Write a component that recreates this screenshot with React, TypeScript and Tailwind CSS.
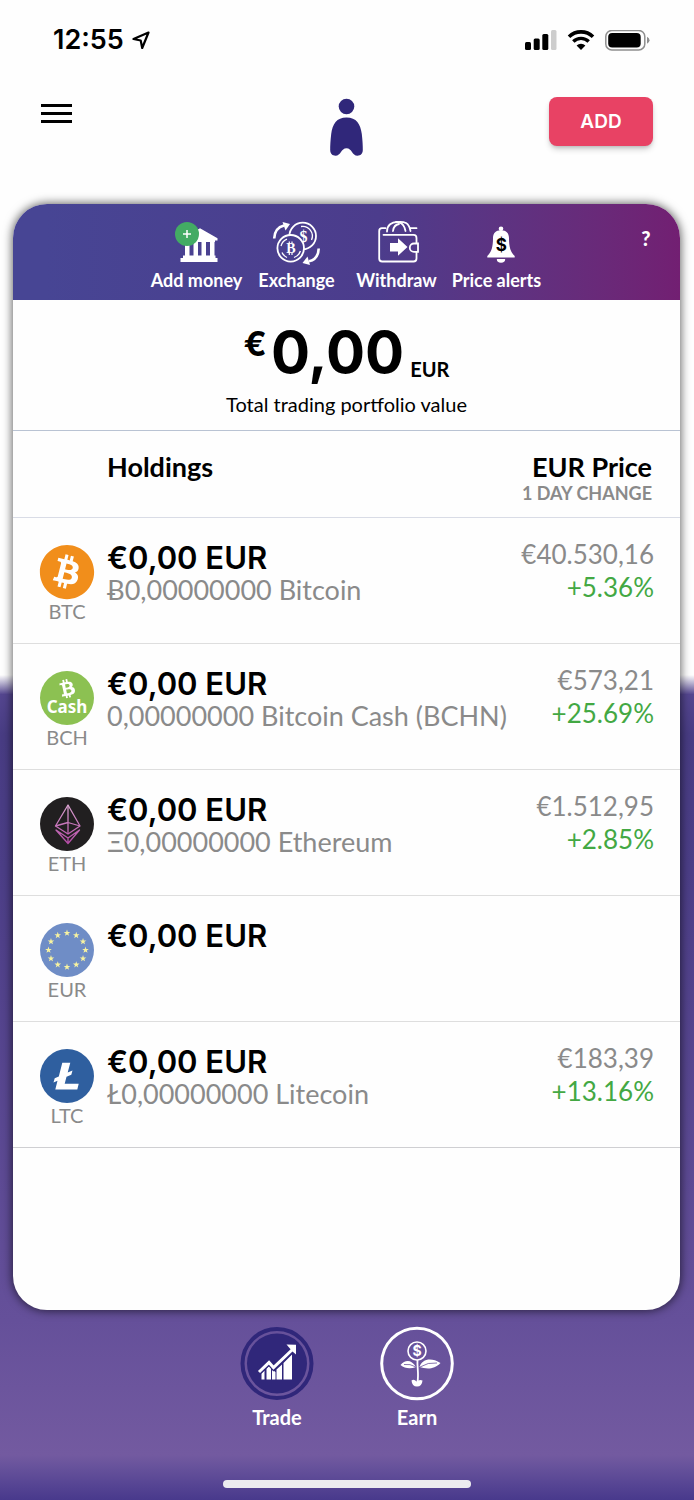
import type { ReactNode } from "react";
import { FaBitcoin, FaBtc } from "react-icons/fa";

type Holding = {
  code: string;
  icon: ReactNode;
  value: string;
  amount?: string;
  price?: string;
  change?: string;
};

/* ---------- Status bar ---------- */

function StatusBar() {
  return (
    <div className="flex h-20 items-center justify-between pr-11 pl-[53px] text-black">
      <div className="flex items-center gap-2">
        <span className="font-[Inter,sans-serif] text-[27px] leading-8 font-semibold">12:55</span>
        <svg width="18" height="19" viewBox="0 0 18 19" fill="none" aria-hidden>
          <path d="M16.5 1.500 L1.500 8 L8.700 9.500 L10.200 17 Z" stroke="currentColor" strokeWidth="2.200" strokeLinejoin="round" />
        </svg>
      </div>
      <div className="flex items-center gap-[10px]">
        <svg width="32" height="21" viewBox="0 0 32 21" fill="currentColor" aria-hidden>
          <rect x="0" y="12" width="6" height="8" rx="1.500" />
          <rect x="8.700" y="8.500" width="6" height="11.500" rx="1.500" />
          <rect x="17.300" y="4" width="6" height="16" rx="1.500" />
          <rect x="26" y="0" width="5.500" height="20" rx="1.500" fill="#cdcdcd" />
        </svg>
        <svg width="28" height="21" viewBox="0 0 28 21" fill="none" stroke="currentColor" aria-hidden>
          <path d="M2 6.800 A17.200 17.200 0 0 1 26 6.800" strokeWidth="3.600" />
          <path d="M6.300 11.500 A11 11 0 0 1 21.700 11.500" strokeWidth="3.400" />
          <path d="M14 20 L9.600 15.500 A6.300 6.300 0 0 1 18.400 15.500 Z" fill="currentColor" stroke="none" />
        </svg>
        <svg width="45" height="21" viewBox="0 0 45 21" aria-hidden>
          <rect x="0.800" y="0.500" width="39" height="19.400" rx="6" fill="none" stroke="#8f8f8f" strokeWidth="1.500" />
          <rect x="3.200" y="2.900" width="32.500" height="14.600" rx="4" fill="#000" />
          <path d="M42 6.700 Q44.500 7.700 44.500 10.200 Q44.500 12.700 42 13.700 Z" fill="#8f8f8f" />
        </svg>
      </div>
    </div>
  );
}

/* ---------- Top bar ---------- */

function TopBar() {
  return (
    <header className="grid h-[124px] grid-cols-3 items-start px-[41px] pt-[17px]">
      <button type="button" aria-label="Menu" className="mt-[7px] flex w-[31px] flex-col gap-[5px]">
        <span className="h-[3px] bg-black" />
        <span className="h-[3px] bg-black" />
        <span className="h-[3px] bg-black" />
      </button>
      <svg width="34" height="58" viewBox="0 0 34 58" fill="#30277a" className="mt-px justify-self-center" aria-hidden>
        <circle cx="16.500" cy="8.500" r="7.800" />
        <path d="M16.500 19.500 C26.500 19.500 30.500 26 31.800 36 C32.500 42 32.900 48 32.800 52 C32.700 56 30.500 57.700 27.500 57.700 C22 57.700 22 50.200 16.500 50.200 C11 50.200 11 57.700 5.500 57.700 C2.500 57.700 0.300 56 0.200 52 C0.100 48 0.500 42 1.200 36 C2.500 26 6.500 19.500 16.500 19.500 Z" />
      </svg>
      <button
        type="button"
        className="h-[49px] w-[104px] justify-self-end rounded-lg bg-[#e84264] pt-[2px] font-[Inter,sans-serif] text-[19px] font-semibold text-white shadow-md shadow-black/20"
      >
        ADD
      </button>
    </header>
  );
}

/* ---------- Quick actions ---------- */

function BankIcon() {
  return (
    <svg width="60" height="48" viewBox="0 0 60 48" fill="#fff" aria-hidden>
      <path d="M13.500 21.500 L33 10.300 L50.500 20.300 L50.500 22.500 L48 22.500 L48 24 L16 24 L16 22 Z" />
      <path d="M18 24 H22.500 V38 H18 Z M26.500 24 H31 V38 H26.500 Z M34.500 24 H39 V38 H34.500 Z M43 24 H47.500 V38 H43 Z" />
      <path d="M16 37.500 H48.500 V40 H50.500 V44 H13.500 V40 H16 Z" />
      <circle cx="20" cy="16" r="12" fill="#43ab64" />
      <path d="M20 12 V20 M16 16 H24" stroke="#fff" strokeWidth="1.500" />
    </svg>
  );
}

function ExchangeIcon() {
  return (
    <svg width="60" height="48" viewBox="0 0 60 48" fill="none" stroke="#fff" strokeWidth="1.800" aria-hidden>
      <circle cx="35.700" cy="18" r="13.300" />
      <path d="M34 8.500 A9.700 9.700 0 0 1 44.500 22" strokeWidth="1.300" />
      <text x="36.500" y="23.500" textAnchor="middle" fill="#fff" stroke="none" fontSize="16" fontWeight="700" fontFamily="Liberation Serif, serif">$</text>
      <circle cx="23.700" cy="30.300" r="13.300" fill="#4a408f" />
      <path d="M14 28 A10 10 0 0 1 20 21.200 M33.400 33 A10 10 0 0 1 27 39.500 M15 34.500 A10 10 0 0 0 20 39.500" strokeWidth="1.300" />
      <text x="23.800" y="35" textAnchor="middle" fill="#fff" stroke="none" fontSize="14" fontWeight="700" fontFamily="Liberation Serif, serif">B</text>
      <path d="M22.300 25 V23.500 M25 25 V23.500 M22.300 37 V35 M25 37 V35" strokeWidth="1.200" />
      <path d="M7.200 20.500 C7.500 13.500 11 9 17 7.500" strokeWidth="2.600" />
      <path d="M15.500 4 L23 6 L18.500 12.500 Z" fill="#fff" stroke="none" />
      <path d="M51.700 30.500 C51.400 37.500 48 42 42 43.300" strokeWidth="2.600" />
      <path d="M43 47 L35.500 45 L40.500 38.500 Z" fill="#fff" stroke="none" />
    </svg>
  );
}

function WalletIcon() {
  return (
    <svg width="60" height="48" viewBox="0 0 60 48" fill="none" stroke="#fff" strokeWidth="1.800" strokeLinecap="round" aria-hidden>
      <path d="M49.500 25 V20 Q49.500 16.800 46.500 16.800 H16.500" />
      <path d="M18.500 10.200 H15 Q12.200 10.200 12.200 13 V40.500 Q12.200 43.500 15.200 43.500 H46.500 Q49.500 43.500 49.500 40.500 V34" />
      <path d="M20 13.500 C20 7 25 4 30 4 C33 4 36 6 37.500 9.500 L38.500 13" />
      <path d="M26 13 C26.500 9 28.500 6.500 32 6 M29 4.200 C33 3.500 36 3.500 39 5 C42.500 7 43 10.200 43.500 13" />
      <path d="M43.500 10.200 H49.500" />
      <path d="M51 25.500 H47 A4.200 4.200 0 0 0 47 33.900 H51 Z" />
      <path d="M23 25 H31 V20.300 L40.500 29 L31 37.700 V33.500 H23 Z" fill="#fff" stroke="none" />
    </svg>
  );
}

function BellIcon() {
  return (
    <svg width="60" height="48" viewBox="0 0 60 48" fill="#fff" aria-hidden>
      <circle cx="34" cy="10.800" r="2.300" />
      <path d="M34 12.200 C39.500 12.200 42 15.500 42 20 C42 29 43.500 34 47.700 38 V39.500 H20.300 V38 C24.500 34 26 29 26 20 C26 15.500 28.500 12.200 34 12.200 Z" />
      <path d="M29.800 41 H38.200 A4.200 3.800 0 0 1 29.800 41 Z" />
      <text x="34.200" y="33" textAnchor="middle" fill="#000" fontSize="17" fontWeight="700" fontFamily="Inter, sans-serif">$</text>
    </svg>
  );
}

const ACTIONS = [
  { label: "Add money", icon: <BankIcon /> },
  { label: "Exchange", icon: <ExchangeIcon /> },
  { label: "Withdraw", icon: <WalletIcon /> },
  { label: "Price alerts", icon: <BellIcon /> },
];

function QuickActions() {
  return (
    <div className="relative flex h-24 justify-center bg-linear-to-r from-[#474594] from-5% via-[#4c3c8c] via-55% to-[#721f72] pt-[14px]">
      {ACTIONS.map((action) => (
        <button key={action.label} type="button" className="flex w-[100px] flex-col items-center text-white">
          {action.icon}
          <span className="text-[18px] leading-7 font-bold whitespace-nowrap">{action.label}</span>
        </button>
      ))}
      <button type="button" aria-label="Help" className="absolute top-[22px] right-6 w-5 text-xl leading-6 font-black text-white">
        ?
      </button>
    </div>
  );
}

/* ---------- Coin icons ---------- */

function CashIcon() {
  return (
    <div className="flex size-[54px] flex-col items-center rounded-full bg-[#8cc152] pt-2 text-white">
      <FaBtc className="size-[19px] -rotate-12" />
      <span className="font-['Noto_Sans',sans-serif] text-[17px] leading-[18px] font-bold">Cash</span>
    </div>
  );
}

function EthereumIcon() {
  return (
    <svg width="54" height="54" viewBox="0 0 54 54" fill="none" strokeLinejoin="round" aria-hidden>
      <defs>
        <linearGradient id="eth" gradientUnits="userSpaceOnUse" x1="0" y1="8" x2="0" y2="46">
          <stop offset="0" stopColor="#d9a3cf" />
          <stop offset="1" stopColor="#b44ba6" />
        </linearGradient>
      </defs>
      <circle cx="27" cy="27" r="27" fill="#211f20" />
      <g stroke="url(#eth)" strokeWidth="1.300">
        <path d="M28 8 L15.500 29 L28 37 L40 29 Z" />
        <path d="M15.500 29 L28 25.500 L40 29 M28 8 V37" />
        <path d="M16 33 L28 46.500 L39.500 33 L28 41 Z M28 41 V46.500" />
      </g>
    </svg>
  );
}

function EuroIcon() {
  const stars = Array.from({ length: 12 }, (_, i) => i * 30);
  return (
    <svg width="54" height="54" viewBox="0 0 54 54" aria-hidden>
      <circle cx="27" cy="27" r="27" fill="#6f8dc6" />
      {stars.map((deg) => {
        const a = (deg * Math.PI) / 180;
        const x = 27 + 18.5 * Math.sin(a);
        const y = 27 - 17 * Math.cos(a);
        return (
          <path
            key={deg}
            transform={`translate(${x} ${y})`}
            d="M0 -3.500 L0.800 -1.100 L3.300 -1.100 L1.300 0.450 L2.050 2.850 L0 1.400 L-2.050 2.850 L-1.300 0.450 L-3.300 -1.100 L-0.800 -1.100 Z"
            fill="#f8f3a0"
          />
        );
      })}
    </svg>
  );
}

function LitecoinIcon() {
  return (
    <svg width="54" height="54" viewBox="0 0 54 54" aria-hidden>
      <circle cx="27" cy="27" r="27" fill="#2f5f9f" />
      <path
        d="M22.300 13.800 H30.300 L27.700 23.500 L32.500 21.500 L31.300 25.800 L26.500 27.800 L24.700 34.800 H38.700 L37.300 40.500 H15.300 L17.500 31.800 L13.500 33.500 L14.700 29.200 L18.800 27.400 Z"
        fill="#fff"
      />
    </svg>
  );
}

/* ---------- Holdings ---------- */

const HOLDINGS: Holding[] = [
  {
    code: "BTC",
    icon: <FaBitcoin className="-m-px size-14 text-[#f18e1b]" />,
    value: "€0,00 EUR",
    amount: "Ƀ0,00000000 Bitcoin",
    price: "€40.530,16",
    change: "+5.36%",
  },
  {
    code: "BCH",
    icon: <CashIcon />,
    value: "€0,00 EUR",
    amount: "0,00000000 Bitcoin Cash (BCHN)",
    price: "€573,21",
    change: "+25.69%",
  },
  {
    code: "ETH",
    icon: <EthereumIcon />,
    value: "€0,00 EUR",
    amount: "Ξ0,00000000 Ethereum",
    price: "€1.512,95",
    change: "+2.85%",
  },
  { code: "EUR", icon: <EuroIcon />, value: "€0,00 EUR" },
  {
    code: "LTC",
    icon: <LitecoinIcon />,
    value: "€0,00 EUR",
    amount: "Ł0,00000000 Litecoin",
    price: "€183,39",
    change: "+13.16%",
  },
];

function PortfolioTotal() {
  return (
    <div className="flex h-[131px] flex-col items-center border-b border-[#b9c3d3] pt-5 text-black">
      <div className="flex h-[68px] items-start font-bold">
        <span className="font-[Inter,sans-serif] text-[34px] leading-[48px]">€</span>
        <span className="ml-1 font-[Inter,sans-serif] text-[58px] leading-[64px]">0,00</span>
        <span className="ml-[6px] pt-[35px] text-[20px] leading-7">EUR</span>
      </div>
      <p className="pt-1 text-[20px] leading-6">Total trading portfolio value</p>
    </div>
  );
}

function HoldingsTable() {
  return (
    <table className="w-full border-collapse text-left">
      <thead>
        <tr className="h-[86px] border-b border-[#d9dce6] align-top text-black">
          <th aria-label="Coin" className="w-[94px]" />
          <th className="pt-5 text-[27px] leading-8 font-bold">Holdings</th>
          <th className="pt-5 pr-7 text-right text-[27px] leading-8 font-bold">
            EUR Price
            <span className="block text-[18px] leading-5 text-[#8a8a8a]">1 DAY CHANGE</span>
          </th>
        </tr>
      </thead>
      <tbody>
        {HOLDINGS.map((h) => (
          <tr key={h.code} className="h-[126px] border-b border-[#dedede] align-top last:border-[#cfcfd2]">
            <td className="pt-[27px] pl-[27px]">
              <div className="flex w-[54px] flex-col items-center">
                {h.icon}
                <span className="text-[20px] leading-6 text-[#8a8a8a]">{h.code}</span>
              </div>
            </td>
            <td className="pt-6 whitespace-nowrap">
              <div className="font-[Inter,sans-serif] text-[31px] leading-8 font-semibold text-black">{h.value}</div>
              <div className="text-[27px] leading-8 text-[#8a8a8a]">{h.amount}</div>
            </td>
            <td className="pt-5 pr-[26px] text-right text-[26px] leading-[33px] text-[#8a8a8a]">
              <div>{h.price}</div>
              <div className="text-[#43a843]">{h.change}</div>
            </td>
          </tr>
        ))}
      </tbody>
    </table>
  );
}

/* ---------- Bottom navigation ---------- */

function TradeIcon() {
  return (
    <svg width="74" height="75" viewBox="0 0 74 75" fill="none" aria-hidden>
      <circle cx="37" cy="37.500" r="34.500" stroke="#30277a" strokeWidth="4" />
      <circle cx="37" cy="37.500" r="30" fill="#30277a" />
      <path d="M21.500 47.500 L24.500 44.500 V53.500 H21.500 Z M26.500 42.500 L29 40 L31 42 V53.500 H26.500 Z M32 43.500 L35.500 46 V53.500 H32 Z M36.500 43.500 L42 38.500 V53.500 H36.500 Z M43.500 37 L52 28.500 V53.500 H43.500 Z" fill="#fff" />
      <path d="M19 46 L29 36.500 L33.500 41.500 L53 23" stroke="#30277a" strokeWidth="5.500" />
      <path d="M19 46 L29 36.500 L33.500 41.500 L53 23" stroke="#fff" strokeWidth="3" />
      <path d="M46.500 18.500 L56 18.800 L56 28.500 L52.500 25.500 Z" fill="#fff" />
    </svg>
  );
}

function EarnIcon() {
  return (
    <svg width="74" height="75" viewBox="0 0 74 75" fill="none" aria-hidden>
      <circle cx="37" cy="37.500" r="35.300" stroke="#fff" strokeWidth="3" />
      <circle cx="37" cy="25" r="9" stroke="#fff" strokeWidth="1.600" />
      <text x="37" y="30" textAnchor="middle" fill="#fff" fontSize="14" fontWeight="700" fontFamily="Inter, sans-serif">$</text>
      <path d="M37.500 34 C37 41 39 48 37.500 56" stroke="#fff" strokeWidth="1.800" />
      <path d="M36 41 C31 33 25 34 20.500 39 C25 43 31 43 36 41 Z M39.500 41 C42 33 51 31 60.500 37 C54 44 46 43 39.500 41 Z" fill="#fff" />
      <path d="M24 38.500 Q30 37.500 36 41 M57 37 Q48 36 40 41" stroke="#69539a" strokeWidth="0.800" />
      <path d="M31.500 54.500 Q34 52.500 36.500 55.500 Q39.500 53 42.500 54.500 Q42 60.500 37 60.500 Q32 60.500 31.500 54.500 Z" fill="#fff" />
    </svg>
  );
}

function BottomNav() {
  return (
    <nav className="flex justify-center gap-[66px] pt-4 text-[20px] leading-8 font-bold text-white">
      <a href="#trade" aria-current="page" className="flex flex-col items-center">
        <TradeIcon />
        Trade
      </a>
      <a href="#earn" className="flex flex-col items-center">
        <EarnIcon />
        Earn
      </a>
    </nav>
  );
}

export default function App() {
  return (
    <div className="flex min-h-screen flex-col bg-[linear-gradient(to_bottom,#fefefe_45%,#54468f_46.300%,#483c83_49%,#4c3e87_58%,#65509a_88%,#735aa0_97%,#64509a_98%,#48398c_100%)] font-[Lato,sans-serif]">
      <StatusBar />
      <TopBar />
      <main className="mr-[14px] ml-[13px] min-h-[1106px] overflow-hidden rounded-[34px] bg-[#fefefe] shadow-[0_0_10px_1px_rgba(0,0,0,0.6)]">
        <QuickActions />
        <PortfolioTotal />
        <HoldingsTable />
      </main>
      <BottomNav />
      <div className="mx-auto mt-auto mb-3 h-2 w-[248px] rounded-full bg-[#ececef]" />
    </div>
  );
}
